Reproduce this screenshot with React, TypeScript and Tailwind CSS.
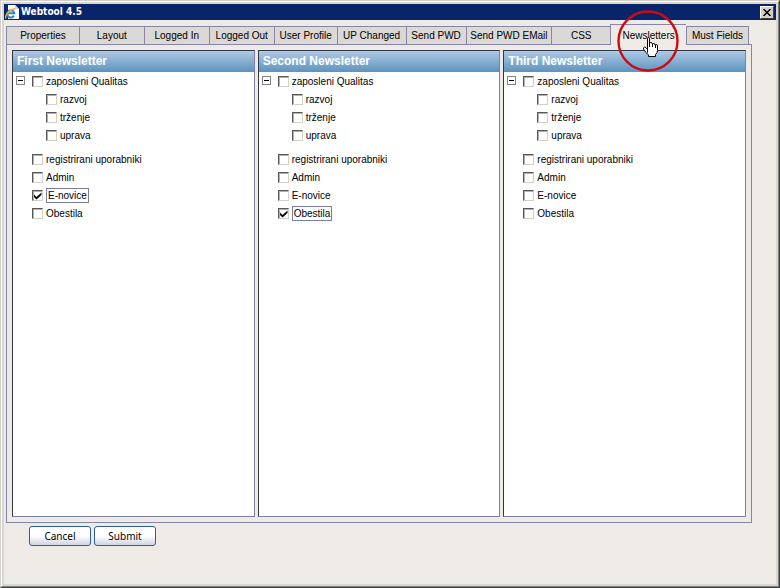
import React, { useState } from "react";

const tabs = [
  { name: "Properties", size: "flex-[73_1_0%]" },
  { name: "Layout", size: "flex-[65_1_0%]" },
  { name: "Logged In", size: "flex-[65_1_0%]" },
  { name: "Logged Out", size: "flex-[65_1_0%]" },
  { name: "User Profile", size: "flex-[63_1_0%]" },
  { name: "UP Changed", size: "flex-[69_1_0%]" },
  { name: "Send PWD", size: "flex-[60_1_0%]" },
  { name: "Send PWD EMail", size: "flex-[86_1_0%]" },
  { name: "CSS", size: "flex-[59_1_0%]" },
  { name: "Newsletters", size: "flex-[76_1_0%]" },
  { name: "Must Fields", size: "flex-[62_1_0%]" },
];

const children = ["razvoj", "trženje", "uprava"];
const groups = ["registrirani uporabniki", "Admin", "E-novice", "Obestila"];

function CheckRow({ label, checked = false }: { label: string; checked?: boolean }) {
  const [on, setOn] = useState(checked);
  return (
    <label className="flex h-[18px] items-center">
      <span className="relative flex">
        <input
          type="checkbox"
          checked={on}
          onChange={() => setOn(!on)}
          className="size-[11px] appearance-none border border-t-[#585858] border-r-[#d4d0c8] border-b-[#d4d0c8] border-l-[#585858] bg-white shadow-[inset_1px_1px_0_#b0b0b0]"
        />
        {on && (
          <svg className="pointer-events-none absolute top-[2px] left-[2px]" width="8" height="8" viewBox="0 0 8 8">
            <path d="M0 2.500v2.500l2.500 2.500L7.500 3V.500L2.500 5z" fill="#000" />
          </svg>
        )}
      </span>
      <span className={on ? "ml-[3px] border border-[#7b7ba8] px-px leading-[13px]" : "ml-[3px] leading-[13px]"}>
        {label}
      </span>
    </label>
  );
}

function Panel({ title, selected }: { title: string; selected?: string }) {
  const [open, setOpen] = useState(true);
  return (
    <section className="flex flex-1 flex-col border border-t-[#303848] border-r-[#7f7fa3] border-b-[#7f7fa3] border-l-[#303848] bg-white">
      <h2 className="h-[21px] bg-linear-to-b from-[#b0cae6] to-[#5c93be] pl-[4px] text-[12px] leading-[21px] font-bold text-white">
        {title}
      </h2>
      <div className="flex">
        <button
          type="button"
          aria-label="Toggle group"
          onClick={() => setOpen(!open)}
          className="mt-[4px] ml-[3px] flex size-[9px] items-center justify-center border border-[#848484] bg-white"
        >
          <span className="h-px w-[5px] bg-black" />
        </button>
        <div className="ml-[7px]">
          <CheckRow label="zaposleni Qualitas" />
          {open && (
            <div className="mb-[6px] ml-[14px]">
              {children.map((c) => (
                <CheckRow key={c} label={c} />
              ))}
            </div>
          )}
          {groups.map((g) => (
            <CheckRow key={g} label={g} checked={g === selected} />
          ))}
        </div>
      </div>
    </section>
  );
}

function Pointer() {
  return (
    <span className="pointer-events-none absolute top-1/2 left-1/2 z-10 -mt-[25px] -ml-[33px]">
      <svg width="64" height="64" viewBox="0 0 64 64">
        <circle cx="32" cy="31" r="29.5" fill="none" stroke="#cc0c14" strokeWidth="2.4" />
        <path
          d="M31.500 42.500V28.500Q31.500 27.500 32.500 27.500T33.500 28.500V33.500Q34 32.500 35 32.500T36.500 34Q37 33.500 38 33.500T39 35Q39.500 34.500 40.500 34.500T41.500 36V40.500Q41.500 43 39.500 44.500V46.500H32.500V45L30 42.500L27.500 39Q27 37.500 28.500 37Q30 37 31.500 39.500Z"
          fill="#fff"
          stroke="#000"
        />
        <path d="M33.500 33v4M36.500 34v3M39.500 35v3" stroke="#000" fill="none" />
      </svg>
    </span>
  );
}

function BrowserIcon() {
  return (
    <svg width="14" height="16" viewBox="0 0 14 16">
      <path d="M3 1h7l4 4v10H3z" fill="#fff" />
      <path d="M10 1v4h4" fill="#cfd6e2" />
      <path d="M9 11.500A3.600 3.600 0 1 1 9.300 9.200H3" fill="none" stroke="#2b83d6" strokeWidth="2" />
      <path d="M1.200 14.500C-.800 12.500 3 6.500 10 4.500" fill="none" stroke="#f2ad1c" strokeWidth="1.400" />
    </svg>
  );
}

const buttonClass =
  "h-[20px] w-[62px] rounded-[3px] border border-[#2f5f94] bg-linear-to-b from-white via-white to-[#cfd3e3] font-['Noto_Sans',sans-serif] text-[10px] leading-[18px]";

export default function App() {
  return (
    <div className="flex min-h-screen flex-col border border-t-[#d4d0c8] border-r-[#404040] border-b-[#404040] border-l-[#d4d0c8] font-['Liberation_Sans',Arial,sans-serif] text-[10px] text-black">
      <div className="flex flex-1 flex-col border border-t-white border-r-[#808080] border-b-[#808080] border-l-white">
        <div className="flex flex-1 flex-col border-2 border-[#d9d5d0] bg-[#eeebe6]">
          <header className="flex h-[16px] items-center bg-[#0a246a] pr-[2px] pl-px text-white">
            <BrowserIcon />
            <h1 className="ml-[2px] flex-1 font-['DejaVu_Sans_Condensed','DejaVu_Sans',sans-serif] text-[10px] leading-[16px] font-bold">Webtool 4.5</h1>
            <button
              type="button"
              aria-label="Close"
              className="flex h-[13px] w-[14px] items-center justify-center border border-t-white border-r-[#404040] border-b-[#404040] border-l-white bg-[#d4d0c8]"
            >
              <svg width="8" height="7" viewBox="0 0 8 7">
                <path d="M.500 0l7 7M7.500 0l-7 7" stroke="#000" strokeWidth="1.500" />
              </svg>
            </button>
          </header>
          <main className="mt-[4px] mr-[24px] ml-[2px] flex flex-1 flex-col">
            <nav className="flex h-[20px] items-end pr-[3px]">
              {tabs.map((t) =>
                t.name === "Newsletters" ? (
                  <button
                    key={t.name}
                    type="button"
                    className={`${t.size} relative -mb-px h-[21px] border-t border-l border-[#8686a6] bg-[#eeebe6] pt-px leading-[19px] whitespace-nowrap`}
                  >
                    {t.name}
                    <Pointer />
                  </button>
                ) : (
                  <button
                    key={t.name}
                    type="button"
                    className={`${t.size} h-[18px] border-t border-l border-[#8686a6] bg-[#dbd8d5] leading-[17px] whitespace-nowrap last:border-r`}
                  >
                    {t.name}
                  </button>
                ),
              )}
            </nav>
            <div className="flex flex-1 gap-[3px] border border-[#8686a6] p-[5px]">
              <Panel title="First Newsletter" selected="E-novice" />
              <Panel title="Second Newsletter" selected="Obestila" />
              <Panel title="Third Newsletter" />
            </div>
          </main>
          <footer className="flex gap-[3px] pt-[3px] pb-[38px] pl-[25px]">
            <button type="button" className={buttonClass}>Cancel</button>
            <button type="button" className={buttonClass}>Submit</button>
          </footer>
        </div>
      </div>
    </div>
  );
}
